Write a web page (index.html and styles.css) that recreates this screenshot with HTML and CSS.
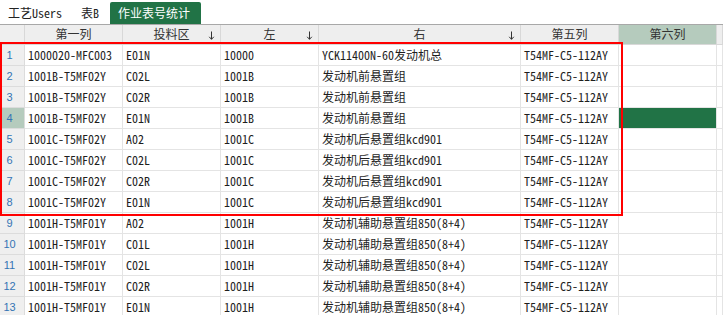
FILE: index.html
```html
<!DOCTYPE html>
<html lang="zh">
<head>
    <meta charset="UTF-8">
    <title>作业表号统计</title>
    <link rel="stylesheet" href="styles.css">
</head>
<body>
    <div class="tabs">
        <div class="tab">工艺<span class="mono">Users</span></div>
        <div class="tab">表<span class="mono">B</span></div>
        <div class="tab tab-active">作业表号统计</div>
    </div>

    <div class="sheet">
        <div class="row head">
            <div class="cell rn"></div>
            <div class="cell">第一列</div>
            <div class="cell">投料区<svg class="sort" viewBox="0 0 7 9"><path d="M3.5 0.5V8.3M1.2 5.8L3.5 8.3L5.8 5.8"/></svg></div>
            <div class="cell">左<svg class="sort" viewBox="0 0 7 9"><path d="M3.5 0.5V8.3M1.2 5.8L3.5 8.3L5.8 5.8"/></svg></div>
            <div class="cell">右<svg class="sort" viewBox="0 0 7 9"><path d="M3.5 0.5V8.3M1.2 5.8L3.5 8.3L5.8 5.8"/></svg></div>
            <div class="cell">第五列</div>
            <div class="cell cur">第六列</div>
            <div class="cell"></div>
        </div>

        <div class="row"><div class="cell rn">1</div><div class="cell">1000020-MFC003</div><div class="cell">E01N</div><div class="cell">10000</div><div class="cell">YCK11400N-60发动机总</div><div class="cell">T54MF-C5-112AY</div><div class="cell"></div><div class="cell"></div></div>
        <div class="row"><div class="cell rn">2</div><div class="cell">1001B-T5MF02Y</div><div class="cell">C02L</div><div class="cell">1001B</div><div class="cell">发动机前悬置组</div><div class="cell">T54MF-C5-112AY</div><div class="cell"></div><div class="cell"></div></div>
        <div class="row"><div class="cell rn">3</div><div class="cell">1001B-T5MF02Y</div><div class="cell">C02R</div><div class="cell">1001B</div><div class="cell">发动机前悬置组</div><div class="cell">T54MF-C5-112AY</div><div class="cell"></div><div class="cell"></div></div>
        <div class="row"><div class="cell rn rn-sel">4</div><div class="cell">1001B-T5MF02Y</div><div class="cell">E01N</div><div class="cell">1001B</div><div class="cell">发动机前悬置组</div><div class="cell">T54MF-C5-112AY</div><div class="cell fill"></div><div class="cell"></div></div>
        <div class="row"><div class="cell rn">5</div><div class="cell">1001C-T5MF02Y</div><div class="cell">A02</div><div class="cell">1001C</div><div class="cell">发动机后悬置组kcd901</div><div class="cell">T54MF-C5-112AY</div><div class="cell"></div><div class="cell"></div></div>
        <div class="row"><div class="cell rn">6</div><div class="cell">1001C-T5MF02Y</div><div class="cell">C02L</div><div class="cell">1001C</div><div class="cell">发动机后悬置组kcd901</div><div class="cell">T54MF-C5-112AY</div><div class="cell"></div><div class="cell"></div></div>
        <div class="row"><div class="cell rn">7</div><div class="cell">1001C-T5MF02Y</div><div class="cell">C02R</div><div class="cell">1001C</div><div class="cell">发动机后悬置组kcd901</div><div class="cell">T54MF-C5-112AY</div><div class="cell"></div><div class="cell"></div></div>
        <div class="row"><div class="cell rn">8</div><div class="cell">1001C-T5MF02Y</div><div class="cell">E01N</div><div class="cell">1001C</div><div class="cell">发动机后悬置组kcd901</div><div class="cell">T54MF-C5-112AY</div><div class="cell"></div><div class="cell"></div></div>
        <div class="row"><div class="cell rn">9</div><div class="cell">1001H-T5MF01Y</div><div class="cell">A02</div><div class="cell">1001H</div><div class="cell">发动机辅助悬置组850(8+4)</div><div class="cell">T54MF-C5-112AY</div><div class="cell"></div><div class="cell"></div></div>
        <div class="row"><div class="cell rn">10</div><div class="cell">1001H-T5MF01Y</div><div class="cell">C01L</div><div class="cell">1001H</div><div class="cell">发动机辅助悬置组850(8+4)</div><div class="cell">T54MF-C5-112AY</div><div class="cell"></div><div class="cell"></div></div>
        <div class="row"><div class="cell rn">11</div><div class="cell">1001H-T5MF01Y</div><div class="cell">C02L</div><div class="cell">1001H</div><div class="cell">发动机辅助悬置组850(8+4)</div><div class="cell">T54MF-C5-112AY</div><div class="cell"></div><div class="cell"></div></div>
        <div class="row"><div class="cell rn">12</div><div class="cell">1001H-T5MF01Y</div><div class="cell">C02R</div><div class="cell">1001H</div><div class="cell">发动机辅助悬置组850(8+4)</div><div class="cell">T54MF-C5-112AY</div><div class="cell"></div><div class="cell"></div></div>
        <div class="row"><div class="cell rn">13</div><div class="cell">1001H-T5MF01Y</div><div class="cell">E01N</div><div class="cell">1001H</div><div class="cell">发动机辅助悬置组850(8+4)</div><div class="cell">T54MF-C5-112AY</div><div class="cell"></div><div class="cell"></div></div>

        <!-- red box around rows 1-8 -->
        <div class="mark"></div>
    </div>
</body>
</html>
```

FILE: styles.css
```css
* {
    margin: 0;
    padding: 0;
    box-sizing: border-box;
}

body {
    font-family: "Noto Sans CJK SC", sans-serif;
    font-size: 12px;
    color: #222;
    background: #fff;
    width: 723px;
    height: 315px;
    overflow: hidden;
}

.mono {
    font-family: "Noto Sans Mono CJK SC", "Liberation Mono", monospace;
}

/* sheet tabs */
.tabs {
    display: flex;
    align-items: flex-end;
    gap: 3px;
    height: 24px;
}

.tab {
    height: 22px;
    line-height: 22px;
    padding: 0 8px;
    white-space: nowrap;
}

.tab-active {
    background: #217346;
    color: #fff;
    padding-right: 11px;
    border-radius: 2px 2px 0 0;
}

/* grid */
.sheet {
    position: relative;
    border-top: 1px solid #a8a8a8;
}

.row {
    display: grid;
    grid-template-columns: 25px 98px 98px 98px 202px 98px 98px 1fr;
    height: 21px;
}

.cell {
    border-right: 1px solid #e4e4e4;
    border-bottom: 1px solid #e4e4e4;
    padding-left: 3px;
    line-height: 20px;
    white-space: nowrap;
    overflow: hidden;
    font-family: "Noto Sans Mono CJK SC", "Liberation Mono", "Noto Sans CJK SC", monospace;
    color: #1e1e1e;
}

.head {
    height: 20px;
    background: #eeeeee;
}

.head .cell {
    position: relative;
    padding-left: 0;
    text-align: center;
    line-height: 18px;
    font-family: "Noto Sans CJK SC", sans-serif;
    color: #333;
    border-color: #d8d8d8;
}

.head .cur {
    background: #b5cbbd;
}

.sort {
    position: absolute;
    right: 5px;
    top: 6px;
    width: 7px;
    height: 9px;
    fill: none;
    stroke: #333;
    stroke-width: 1;
}

.rn {
    background: #efefef;
    color: #3474b4;
    font-family: "Liberation Sans", Arial, sans-serif;
    font-size: 11px;
    text-align: center;
    padding: 0 5px 0 0;
    border-color: #dcdcdc;
}

.rn-sel {
    background: #b5cbbd;
}

.fill {
    background: #217346;
}

.mark {
    position: absolute;
    left: 0;
    top: 17px;
    width: 623px;
    height: 174px;
    border: 2px solid #ff0000;
    pointer-events: none;
}
```
